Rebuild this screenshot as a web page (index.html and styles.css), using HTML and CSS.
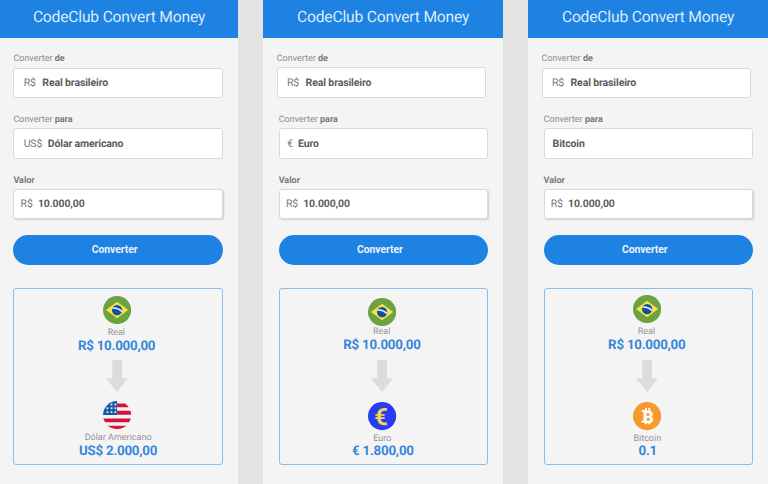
FILE: index.html
```html
<!DOCTYPE html>
<html lang="pt-BR">
<head>
<meta charset="utf-8">
<title>CodeClub Convert Money</title>
<link rel="stylesheet" href="styles.css">
</head>
<body>
<svg class="defs" width="0" height="0" aria-hidden="true">
  <symbol id="brazil" viewBox="0 0 28 28">
    <circle cx="14" cy="14" r="14" fill="#6ca340"/>
    <path d="M3 14 14 5.8 25 14 14 22.2Z" fill="#fbdf4b"/>
    <circle cx="14" cy="14" r="5.1" fill="#0b52a5"/>
    <path d="M9.3 12.1Q14.6 11.4 18.8 15.5" fill="none" stroke="#f3f6f8" stroke-width="1.4"/>
  </symbol>
  <symbol id="usa" viewBox="0 0 28 28">
    <clipPath id="disc"><circle cx="14" cy="14" r="14"/></clipPath>
    <g clip-path="url(#disc)">
      <path d="M0 0H28V28H0Z" fill="#f3f3f5"/>
      <path d="M14 2.4H28V6.2H14ZM14 9.8H28V13.6H14ZM0 17.4H28V21H0ZM0 24.6H28V28H0Z" fill="#d0143a"/>
      <path d="M0 0H14V14H0Z" fill="#1557a8"/>
      <path d="M3.5 7.2H5.3M7.6 3.5H9.4M7.6 7.2H9.4M3.5 11H5.3M7.6 11H9.4M11.4 3.5H13.2M11.4 7.2H13.2M11.4 11H13.2" fill="none" stroke="#dce8f5" stroke-width="1.8"/>
    </g>
  </symbol>
  <symbol id="arrow" viewBox="0 0 22 32">
    <path d="M6.3 0H16V18.2H22L11 32 0 18.2H6.3Z" fill="#dcdcdc"/>
  </symbol>
</svg>
<div class="board">
  <main class="screen screen-usd">
    <header>CodeClub Convert Money</header>
    <div class="body">
      <section class="field from"><label>Converter <b>de</b></label><div class="box"><span>R$</span><b>Real brasileiro</b></div></section>
      <section class="field to"><label>Converter <b>para</b></label><div class="box"><span>US$</span><b>Dólar americano</b></div></section>
      <section class="field value"><label><b>Valor</b></label><div class="box"><span>R$</span><b>10.000,00</b></div></section>
      <button>Converter</button>
      <section class="result">
        <svg class="coin source"><use href="#brazil"/></svg>
        <p class="name">Real</p>
        <p class="amount">R$ 10.000,00</p>
        <svg class="arrow"><use href="#arrow"/></svg>
        <svg class="coin target"><use href="#usa"/></svg>
        <p class="name last">Dólar Americano</p>
        <p class="amount last">US$ 2.000,00</p>
      </section>
    </div>
  </main>
  <main class="screen screen-eur">
    <header>CodeClub Convert Money</header>
    <div class="body">
      <section class="field from"><label>Converter <b>de</b></label><div class="box"><span>R$</span><b>Real brasileiro</b></div></section>
      <section class="field to"><label>Converter <b>para</b></label><div class="box"><span>€</span><b>Euro</b></div></section>
      <section class="field value"><label><b>Valor</b></label><div class="box"><span>R$</span><b>10.000,00</b></div></section>
      <button>Converter</button>
      <section class="result">
        <svg class="coin source"><use href="#brazil"/></svg>
        <p class="name">Real</p>
        <p class="amount">R$ 10.000,00</p>
        <svg class="arrow"><use href="#arrow"/></svg>
        <svg class="coin target" viewBox="0 0 28 28"><circle cx="14" cy="14" r="14" fill="#263df5"/><text class="euro-sign" x="13" y="23.2">€</text></svg>
        <p class="name last">Euro</p>
        <p class="amount last">€ 1.800,00</p>
      </section>
    </div>
  </main>
  <main class="screen screen-btc">
    <header>CodeClub Convert Money</header>
    <div class="body">
      <section class="field from"><label>Converter <b>de</b></label><div class="box"><span>R$</span><b>Real brasileiro</b></div></section>
      <section class="field to"><label>Converter <b>para</b></label><div class="box"><b>Bitcoin</b></div></section>
      <section class="field value"><label><b>Valor</b></label><div class="box"><span>R$</span><b>10.000,00</b></div></section>
      <button>Converter</button>
      <section class="result">
        <svg class="coin source"><use href="#brazil"/></svg>
        <p class="name">Real</p>
        <p class="amount">R$ 10.000,00</p>
        <svg class="arrow"><use href="#arrow"/></svg>
        <svg class="coin target" viewBox="0 0 28 28">
          <circle cx="14" cy="14" r="14" fill="#f79a2c"/>
          <path d="M12.9 6V9M16.2 6V9M12.9 19.4V22.2M16.2 19.4V22.2M8.6 9H12M8.6 19.5H12" stroke="#fff" stroke-width="1.9"/>
          <text class="bitcoin-sign" x="15.2" y="20.4">B</text>
        </svg>
        <p class="name last">Bitcoin</p>
        <p class="amount last">0.1</p>
      </section>
    </div>
  </main>
</div>
</body>
</html>
```

FILE: styles.css
```css
* { box-sizing: border-box; }

body {
  margin: 0;
  background: #e3e3e3;
  font-family: Roboto, "Liberation Sans", sans-serif;
  color: #626262;
  text-rendering: geometricPrecision;
}

.defs { display: block; height: 0; }

.board {
  display: grid;
  grid-template-columns: 238px 239.5px 239.5px;
  column-gap: 25.4px;
  height: 484px;
  overflow: hidden;
}

.screen { background: #f4f4f4; }

header {
  height: 37.6px;
  background: #1e82e2;
  color: #dcecfc;
  font-size: 15.6px;
  letter-spacing: -.17px;
  line-height: 35px;
  text-align: center;
  white-space: nowrap;
}

.body {
  display: flex;
  flex-direction: column;
  width: 209.4px;
  margin-left: 13.4px;
  padding-top: 14.9px;
}
.screen-eur .body, .screen-btc .body { margin-left: 15.3px; }

.field { margin-bottom: 14.5px; }

label {
  display: block;
  height: 12px;
  margin-bottom: 3.5px;
  font-size: 9px;
  line-height: 14.6px;
  color: #8b8b8b;
  white-space: nowrap;
}
label b { font-weight: 700; color: #797979; }

.box {
  display: flex;
  align-items: center;
  gap: 6.5px;
  height: 30.5px;
  padding: 0 9.3px .6px;
  border: 1px solid #d9d9d9;
  border-radius: 3px;
  background: #fff;
  font-size: 10.5px;
  letter-spacing: -.13px;
  white-space: nowrap;
}
.box span { color: #777; }
.box b { font-weight: 700; color: #5c5c5c; }

.screen-usd .to .box { gap: 5.5px; }
.screen-eur .to .box { padding-left: 7.5px; gap: 5px; }
.screen-btc .to .box { padding-left: 8px; }

.screen-eur .from, .screen-btc .from { margin-left: -2px; margin-right: 2px; }
.screen-eur .from { margin-top: -.7px; margin-bottom: 15.2px; }

.value { padding-top: 1.5px; margin-bottom: 15.3px; }
.value label { margin-bottom: 2px; line-height: 13px; }
.value .box { padding: 0 6.2px 1.5px; gap: 5.2px; box-shadow: 1px 1px 2px rgba(0, 0, 0, .16); }

button {
  height: 30.7px;
  padding: 0 7px 1px 0;
  border: 0;
  border-radius: 16px;
  background: #1e82e2;
  color: #e8f2fd;
  font: 700 10.4px Roboto, sans-serif;
  letter-spacing: -.07px;
}

.result {
  display: flex;
  flex-direction: column;
  align-items: center;
  height: 176.5px;
  margin-top: 22.8px;
  padding: 6.5px 2px 0 0;
  border: 1px solid #8dbcec;
  border-radius: 3px;
}

.coin { flex: none; display: block; width: 28.2px; height: 28.2px; overflow: visible; }

.name, .amount { margin: 0; white-space: nowrap; text-align: center; }
.name { margin-top: 3px; padding-right: 1.5px; font-size: 9px; line-height: 12px; height: 11px; color: #949494; }
.amount { padding-right: 1px; font-size: 13.3px; letter-spacing: -.22px; line-height: 18px; height: 15px; font-weight: 700; color: #3586dc; }

.arrow { flex: none; display: block; width: 22px; height: 32px; margin-top: 7.2px; }
.target { margin-top: 8.4px; }
.last { padding: 0 0 0 2px; }

.screen-eur .source { margin-top: 1.8px; margin-bottom: -2.3px; }
.screen-btc .source { margin-top: -.7px; }
.screen-eur .target, .screen-btc .target { margin-top: 9.9px; }
.screen-btc .arrow { margin-top: 7.7px; }
.screen-eur .name.last, .screen-btc .name.last { margin-top: 3.4px; padding-left: 0; }
.screen-eur .amount.last, .screen-btc .amount.last { margin-top: -1.4px; padding-left: 1px; }

.euro-sign { font: 700 23.5px Roboto, sans-serif; fill: #f6d34f; text-anchor: middle; }
.bitcoin-sign { font: 900 17px Roboto, sans-serif; fill: #fff; text-anchor: middle; }
```
